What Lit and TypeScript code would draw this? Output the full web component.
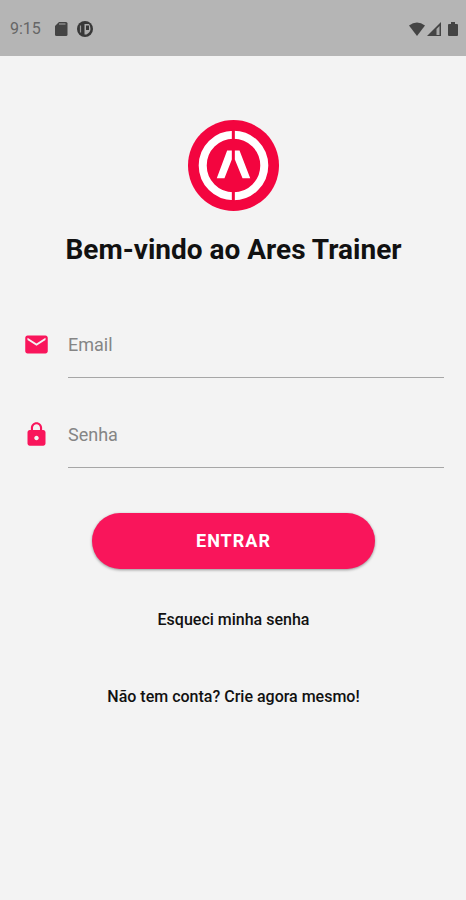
import { LitElement, html, css, svg } from "lit";
import { customElement, property } from "lit/decorators.js";

const mailIcon = svg`<path d="M20 4H4c-1.100 0-1.990.9-1.990 2L2 18c0 1.100.9 2 2 2h16c1.100 0 2-.9 2-2V6c0-1.100-.9-2-2-2zm0 4l-8 5-8-5V6l8 5 8-5v2z"/>`;
const lockIcon = svg`<path d="M18 8h-1V6c0-2.760-2.240-5-5-5S7 3.240 7 6v2H6c-1.100 0-2 .9-2 2v10c0 1.100.9 2 2 2h12c1.100 0 2-.9 2-2V10c0-1.100-.9-2-2-2zm-6 9c-1.100 0-2-.9-2-2s.9-2 2-2 2 .9 2 2-.9 2-2 2zm3.100-9H8.900V6c0-1.710 1.390-3.100 3.100-3.100s3.100 1.390 3.100 3.100v2z"/>`;

@customElement("status-bar")
class StatusBar extends LitElement {
  static styles = css`
    :host {
      display: flex;
      align-items: center;
      justify-content: space-between;
      box-sizing: border-box;
      height: 56px;
      padding: 2px 8px 0 10px;
      background: #b5b5b5;
      color: #666;
      font-size: 16px;
      line-height: 20px;
    }
    .group {
      display: flex;
      align-items: center;
    }
    .left {
      gap: 8px;
    }
    .time {
      margin-right: 4px;
    }
    .battery {
      margin-left: 4px;
    }
    svg {
      display: block;
      fill: #444;
    }
  `;
  render() {
    return html`
      <div class="group left">
        <span class="time">9:15</span>
        <svg width="16" height="16" viewBox="0 0 16 16" aria-hidden="true">
          <path d="M6 1h7q1.500 0 1.500 1.500v11q0 1.500-1.500 1.500H3.500Q2 15 2 13.500V5z" />
          <path d="M6 3h6.500" stroke="#999" stroke-width="1.200" />
        </svg>
        <svg width="16" height="16" viewBox="0 0 16 16" aria-hidden="true">
          <circle cx="8" cy="8" r="8" fill="#383838" />
          <path d="M3.500 4.500v7" stroke="#999" stroke-width="1.200" />
          <path d="M7.500 3H12q1.500 2 1.500 5 0 3-4 5.500h-2z" fill="#adadad" />
          <path d="M9 4.500h3v4.500H9z" fill="#383838" />
        </svg>
      </div>
      <div class="group">
        <svg width="18" height="16" viewBox="0 0 18 16" aria-hidden="true">
          <path d="M1 4.500Q9-1.500 17 4.500L9 15z" />
        </svg>
        <svg width="18" height="16" viewBox="0 0 18 16" aria-hidden="true">
          <path d="M1 15L15 1v14z" />
          <path d="M10.500 8l3-3v9h-3z" fill="#a8a8a8" />
        </svg>
        <svg class="battery" width="10" height="16" viewBox="0 0 10 16" aria-hidden="true">
          <path d="M3 1h4v2h2q1 0 1 1v10q0 1-1 1H1q-1 0-1-1V4q0-1 1-1h2z" />
        </svg>
      </div>
    `;
  }
}

@customElement("brand-logo")
class BrandLogo extends LitElement {
  static styles = css`
    :host {
      display: block;
    }
    svg {
      display: block;
    }
  `;
  render() {
    return html`
      <svg width="91" height="91" viewBox="0 0 272 272" role="img" aria-label="Ares Trainer">
        <circle cx="136" cy="136" r="136" fill="#f3053f" />
        <circle cx="136" cy="136" r="92" fill="none" stroke="#fff" stroke-width="24" />
        <path d="M131 28h9v30h-9zM131 214h9v30h-9z" fill="#f3053f" />
        <path
          d="M117 91h14v27l-22 56H86zM140 91h14l32 83h-23l-23-56z"
          fill="#fff"
        />
      </svg>
    `;
  }
}

@customElement("text-field")
class TextField extends LitElement {
  @property() label = "";
  @property() type = "text";
  @property({ attribute: false }) icon: unknown;

  static styles = css`
    :host {
      display: block;
    }
    .row {
      display: flex;
      align-items: flex-start;
      gap: 18px;
    }
    .icon {
      display: block;
      flex: none;
      margin-top: 19px;
      fill: #f9155b;
    }
    .input {
      flex: 1;
      min-width: 0;
      box-sizing: border-box;
      height: 66px;
      margin: 0;
      padding: 0;
      border: 0;
      border-bottom: 1px solid #a6a6a6;
      border-radius: 0;
      outline: none;
      background: transparent;
      color: #222;
      font: inherit;
      font-size: 18px;
    }
    .input:focus {
      border-bottom-color: #f9155b;
    }
    .input::placeholder {
      color: #858585;
      opacity: 1;
    }
  `;
  render() {
    return html`
      <div class="row">
        <label for="field" aria-label=${this.label}>
          <svg class="icon" width="27" height="27" viewBox="0 0 24 24" aria-hidden="true">${this.icon}</svg>
        </label>
        <input class="input" id="field" type=${this.type} placeholder=${this.label} aria-label=${this.label} />
      </div>
    `;
  }
}

@customElement("app-root")
class AppRoot extends LitElement {
  static styles = css`
    :host {
      display: block;
      min-height: 100vh;
      background: #f3f3f3;
      color: #111;
      font-family: Roboto, "Liberation Sans", sans-serif;
    }
    .page {
      display: flex;
      flex-direction: column;
      align-items: center;
      padding: 64px 22px 32px 23px;
    }
    .title {
      margin: 21px 0 0;
      font-size: 28px;
      line-height: 36px;
      font-weight: 700;
      text-align: center;
    }
    .form {
      display: flex;
      flex-direction: column;
      align-self: stretch;
      gap: 24px;
      margin-top: 44px;
    }
    .submit {
      align-self: center;
      width: 67%;
      height: 56px;
      margin-top: 21px;
      padding: 0 0 2px;
      border: 0;
      border-radius: 28px;
      background: #f9155b;
      box-shadow: 0 1px 3px rgba(0, 0, 0, 0.4);
      color: #fff;
      font: inherit;
      font-size: 18px;
      font-weight: 700;
      letter-spacing: 1px;
      text-transform: uppercase;
    }
    .link {
      color: #111;
      font-size: 16px;
      line-height: 20px;
      font-weight: 500;
      text-decoration: none;
    }
    .forgot {
      margin-top: 41px;
    }
    .signup {
      margin-top: 57px;
    }
  `;
  render() {
    return html`
      <status-bar></status-bar>
      <main class="page">
        <brand-logo></brand-logo>
        <h1 class="title">Bem-vindo ao Ares Trainer</h1>
        <form class="form" @submit=${(e: Event) => e.preventDefault()}>
          <text-field label="Email" type="email" .icon=${mailIcon}></text-field>
          <text-field label="Senha" type="password" .icon=${lockIcon}></text-field>
          <button class="submit" type="submit">Entrar</button>
        </form>
        <a class="link forgot" href="#senha">Esqueci minha senha</a>
        <a class="link signup" href="#conta">Não tem conta? Crie agora mesmo!</a>
      </main>
    `;
  }
}
